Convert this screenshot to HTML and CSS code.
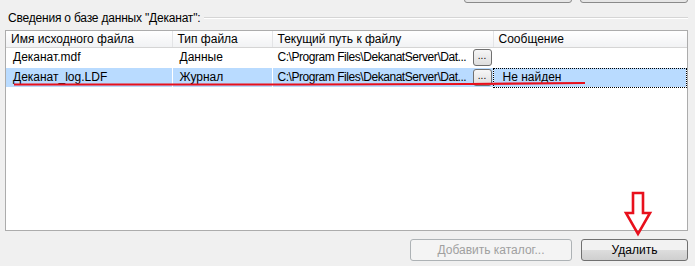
FILE: index.html
```html
<!DOCTYPE html>
<html lang="ru">
<head>
    <meta charset="UTF-8">
    <title>Сведения о базе данных</title>
    <link rel="stylesheet" href="styles.css">
</head>
<body>

<div class="top-buttons">
    <div class="btn"></div>
    <div class="btn"></div>
</div>

<div class="group-title">
    <span>Сведения о базе данных "Деканат":</span>
    <div class="group-line"></div>
</div>

<div class="grid">
    <table>
        <colgroup>
            <col style="width: 166px">
            <col style="width: 100px">
            <col style="width: 221px">
            <col>
        </colgroup>
        <thead>
            <tr>
                <th>Имя исходного файла</th>
                <th>Тип файла</th>
                <th>Текущий путь к файлу</th>
                <th>Сообщение</th>
            </tr>
        </thead>
        <tbody>
            <tr>
                <td>Деканат.mdf</td>
                <td>Данные</td>
                <td>
                    <div class="path-cell">
                        <span class="path">C:\Program Files\DekanatServer\Dat...</span>
                        <span class="dots">...</span>
                    </div>
                </td>
                <td></td>
            </tr>
            <tr class="selected">
                <td>Деканат_log.LDF</td>
                <td>Журнал</td>
                <td>
                    <div class="path-cell">
                        <span class="path">C:\Program Files\DekanatServer\Dat...</span>
                        <span class="dots">...</span>
                    </div>
                </td>
                <td class="focused">Не найден</td>
            </tr>
        </tbody>
    </table>
</div>

<div class="bottom-buttons">
    <button class="btn-add" disabled>Добавить каталог...</button>
    <button class="btn-delete">Удалить</button>
</div>

<!-- пометки красным поверх скриншота -->
<svg class="marks" width="695" height="266" viewBox="0 0 695 266">
    <path d="M14 84.5 L300 84.5 L470 84 L585 83" stroke="#e8101c" stroke-width="2.2" fill="none"/>
    <path d="M633 193 L643 193 L643 213 L650 213 L638 234 L626 213 L633 213 Z" stroke="#e8101c" stroke-width="2.6" fill="none" stroke-linejoin="miter"/>
</svg>

</body>
</html>
```

FILE: styles.css
```css
body {
    margin: 0;
    width: 695px;
    height: 266px;
    overflow: hidden;
    position: relative;
    background: #f0f0f0;
    font-family: "Liberation Sans", Arial, sans-serif;
    font-size: 12px;
    color: #000;
}
.top-buttons {
    display: flex;
    justify-content: flex-end;
    gap: 8px;
    padding-right: 7px;
    margin-top: -20px;
}
.btn {
    width: 106px;
    height: 21px;
    border: 1px solid #8a8a8a;
    border-radius: 3px;
    background: #e6e6e6;
}
.group-title {
    display: flex;
    align-items: center;
    gap: 4px;
    margin: 8px 7px 0 8px;
    height: 14px;
}
.group-title span {
    white-space: nowrap;
    letter-spacing: -0.2px;
}
.group-line {
    flex: 1;
    border-top: 1px solid #d5d5d5;
    border-bottom: 1px solid #fff;
}
.grid {
    margin: 5px 7px 0 5px;
    height: 199px;
    border: 1px solid #acacac;
    background: #fff;
}
table {
    width: 100%;
    border-collapse: collapse;
    table-layout: fixed;
}
th {
    height: 16px;
    padding: 0 0 0 5px;
    text-align: left;
    font-weight: normal;
    background: linear-gradient(#ffffff, #f1f2f4);
    border-right: 1px solid #e3e4e6;
    border-bottom: 1px solid #d5d5d5;
    white-space: nowrap;
}
th:last-child {
    border-right: none;
}
td {
    height: 17px;
    padding: 0 0 2px 7px;
    border-right: 1px solid #fff;
    border-bottom: 1px solid #fff;
    white-space: nowrap;
    overflow: hidden;
}
td:nth-child(3) {
    padding: 0 1px 0 5px;
}
tr.selected td {
    background: #b9dbff;
}
td.focused {
    outline: 1px dotted #000;
    outline-offset: -1px;
    padding-left: 9px;
}
.path-cell {
    display: flex;
    align-items: center;
    gap: 4px;
}
.path {
    flex: 1;
    letter-spacing: -0.45px;
    white-space: nowrap;
    padding-bottom: 2px;
}
.dots {
    width: 17px;
    height: 15px;
    border: 1px solid #707070;
    border-radius: 3px;
    background: linear-gradient(#f6f6f6, #dedede);
    font-size: 10px;
    line-height: 12px;
    text-align: center;
}
.bottom-buttons {
    display: flex;
    justify-content: flex-end;
    gap: 9px;
    margin: 8px 7px 0 0;
}
.bottom-buttons button {
    height: 22px;
    border-radius: 3px;
    font-family: "Liberation Sans", Arial, sans-serif;
    font-size: 12px;
    padding: 0;
}
.btn-add {
    width: 162px;
    border: 1px solid #adb2b5;
    background: #f4f4f4;
    color: #a0a0a0;
}
.btn-delete {
    width: 107px;
    border: 1px solid #707070;
    background: linear-gradient(#f2f2f2 50%, #dddddd 50%, #cfcfcf);
    color: #000;
}
.marks {
    position: absolute;
    left: 0;
    top: 0;
    pointer-events: none;
}
```
